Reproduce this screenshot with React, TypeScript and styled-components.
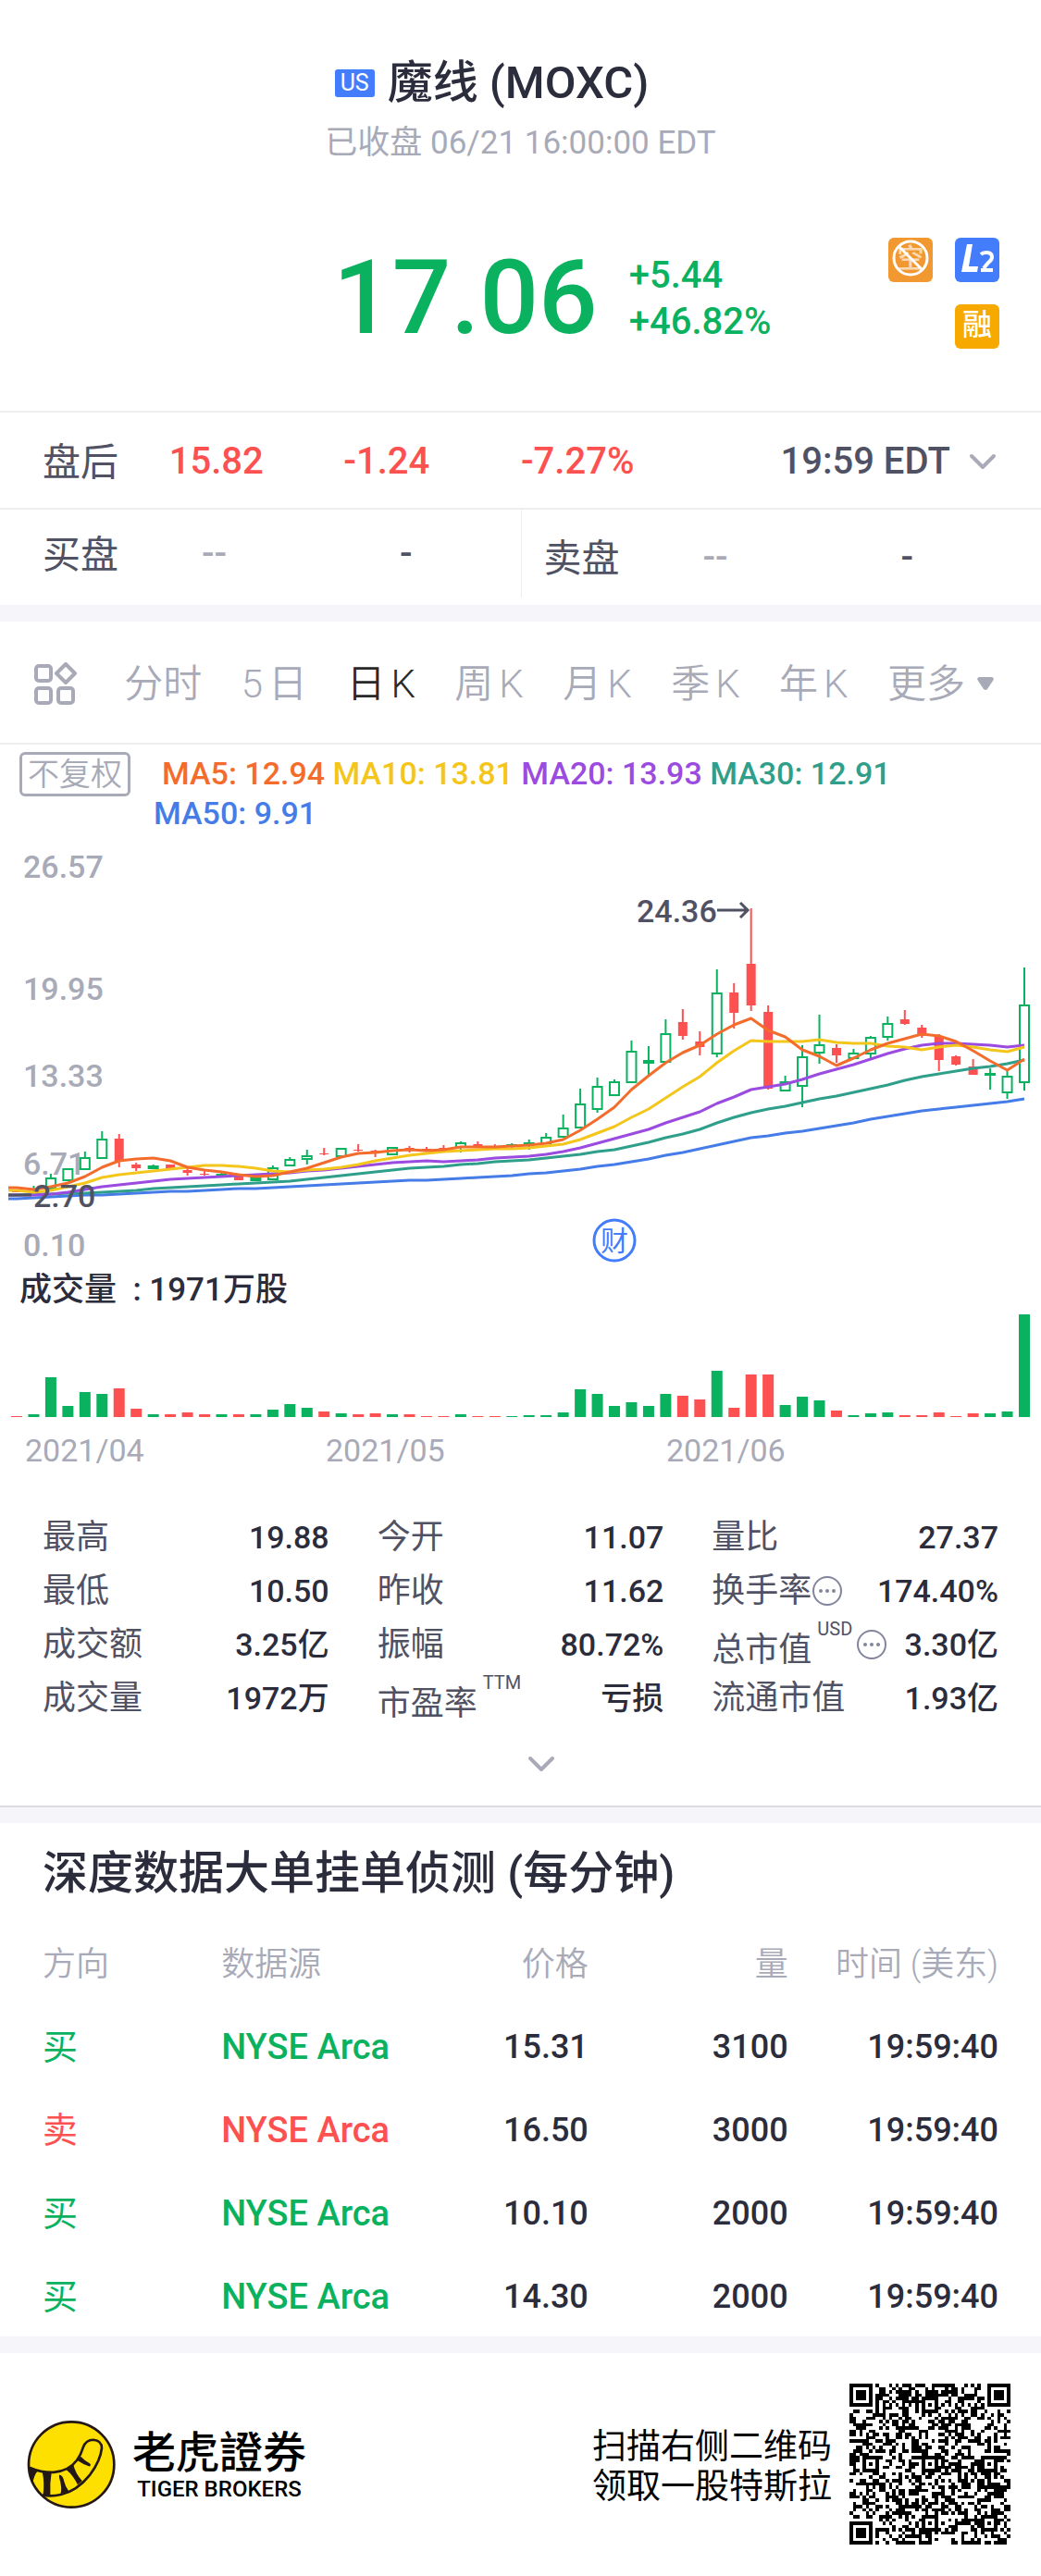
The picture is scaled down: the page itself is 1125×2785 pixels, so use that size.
import React from "react";
import styled, { createGlobalStyle } from "styled-components";

const color = {
  ink: "#2b2c3c",
  text: "#505264",
  muted: "#a8aab8",
  line: "#eeeef1",
  band: "#f6f6fa",
  green: "#0ab25f",
  red: "#fd5050",
  blue: "#437dfb",
};

const fontStack = 'Roboto, "Noto Sans CJK SC", sans-serif';

const GlobalStyle = createGlobalStyle`
  * { box-sizing: border-box; }
  body { margin: 0; background: #fff; color: ${color.ink}; font-family: ${fontStack}; }
  button { font-family: inherit; border: 0; padding: 0; background: none; cursor: pointer; }
  h1, h2, p, dl, dd, dt { margin: 0; }
  svg { display: block; flex: none; }
`;

/* ---------- header ---------- */

const Header = styled.header`
  padding-top: 60px;
`;
const TitleRow = styled.div`
  display: flex;
  align-items: center;
  justify-content: center;
  gap: 14px;
  padding-right: 62px;
`;
const Market = styled.span`
  padding: 0 6px;
  border-radius: 3px;
  background: ${color.blue};
  color: #fff;
  font-size: 25px;
  line-height: 30px;
`;
const Title = styled.h1`
  font-size: 49px;
  line-height: 60px;
  font-weight: 500;
`;
const Session = styled.p`
  margin-top: 15px;
  text-align: center;
  color: ${color.muted};
  font-size: 35px;
  line-height: 40px;
`;
const Quote = styled.div`
  display: flex;
  align-items: flex-start;
  padding: 0 45px 57px 32%;
  margin-top: 82px;
`;
const Price = styled.strong`
  color: ${color.green};
  font-size: 112px;
  line-height: 130px;
  font-weight: 500;
`;
const Change = styled.div`
  display: flex;
  flex-direction: column;
  margin: 16px 0 0 34px;
  color: ${color.green};
  font-size: 40px;
  line-height: 50px;
  font-weight: 500;
`;
const Badges = styled.div`
  display: grid;
  grid-template-columns: 48px 48px;
  gap: 24px;
  margin-left: auto;
`;
const Badge = styled.span<{ $bg: string; $end?: boolean }>`
  display: flex;
  align-items: center;
  justify-content: center;
  height: 48px;
  grid-column: ${(p) => (p.$end ? 2 : "auto")};
  border-radius: 6px;
  background: ${(p) => p.$bg};
  color: #fff;
  font-size: 32px;
  line-height: 44px;
  padding-bottom: 4px;
  font-weight: 500;
`;

const AfterHours = styled.div`
  display: grid;
  grid-template-columns: 137fr 189fr 192fr 160fr 355fr;
  align-items: center;
  height: 105px;
  padding: 2px 48px 0 46px;
  border-top: 2px solid ${color.line};
  color: ${color.red};
  font-size: 40px;
  font-weight: 500;
`;
const RowLabel = styled.span`
  padding-bottom: 6px;
  color: ${color.text};
  font-size: 41px;
  font-weight: 400;
`;
const TimeToggle = styled.button`
  display: flex;
  align-items: center;
  justify-content: flex-end;
  gap: 20px;
  color: ${color.text};
  font-size: 40px;
  font-weight: 500;
`;

const Book = styled.div`
  display: grid;
  grid-template-columns: 1fr 1fr;
  height: 105px;
  border-top: 2px solid ${color.line};
`;
const BookSide = styled.div<{ $ask?: boolean }>`
  display: grid;
  grid-template-columns: 172px 214px 1fr;
  align-items: center;
  height: 95px;
  padding: ${(p) => (p.$ask ? "8px 0 0 24px" : "0 0 0 46px")};
  border-left: ${(p) => (p.$ask ? `1px solid ${color.line}` : "0")};
  color: ${color.text};
  font-size: 40px;
  font-weight: 500;
`;
const Empty = styled.span`
  color: ${color.muted};
`;
const Band = styled.div<{ $ruled?: boolean }>`
  height: ${(p) => (p.$ruled ? 19 : 18)}px;
  border-top: ${(p) => (p.$ruled ? "2px solid #dcdce0" : "0")};
  background: ${color.band};
`;

/* ---------- period tabs ---------- */

const Tabs = styled.nav`
  display: flex;
  align-items: center;
  justify-content: space-between;
  height: 133px;
  padding: 4px 50px 0 36px;
  border-bottom: 2px solid ${color.line};
`;
const Tab = styled.button<{ $active?: boolean; $icon?: boolean; $menu?: boolean }>`
  display: flex;
  align-items: center;
  gap: ${(p) => (p.$menu ? 12 : 6)}px;
  margin-right: ${(p) => (p.$icon ? 8 : 0)}px;
  color: ${(p) => (p.$active ? "#2a2a2a" : color.muted)};
  font-size: 42px;
  line-height: 60px;
  font-weight: 350;
`;

/* ---------- chart ---------- */

const Legend = styled.div`
  display: flex;
  align-items: flex-start;
  padding: 8px 21px 0;
`;
const Adjust = styled.button`
  flex: none;
  width: 120px;
  height: 48px;
  border: 3px solid ${color.muted};
  border-radius: 6px;
  color: ${color.muted};
  font-size: 34px;
  line-height: 40px;
  font-weight: 350;
`;
const Averages = styled.p`
  margin-left: 25px;
  padding-top: 2px;
  text-indent: 9px;
  font-size: 34px;
  line-height: 43px;
  font-weight: 500;
`;
const Average = styled.span<{ $tint: string }>`
  display: inline-block;
  text-indent: 0;
  color: ${(p) => p.$tint};
`;
const VolumeLabel = styled.p`
  padding-left: 21px;
  font-size: 35px;
  line-height: 48px;
  font-weight: 500;
`;
const Dates = styled.div`
  display: grid;
  grid-template-columns: 325fr 368fr 405fr;
  margin-top: 10px;
  padding-left: 27px;
  color: ${color.muted};
  font-size: 34px;
  line-height: 46px;
`;

/* ---------- statistics ---------- */

const Stats = styled.dl`
  display: grid;
  grid-template-columns: repeat(3, 1fr);
  column-gap: 52px;
  margin-top: 42px;
  padding: 0 46px;
`;
const Stat = styled.div`
  display: flex;
  justify-content: space-between;
  height: 58px;
  line-height: 58px;
`;
const StatLabel = styled.dt`
  display: flex;
  align-items: center;
  color: ${color.text};
  font-size: 36px;
  white-space: nowrap;
`;
const StatName = styled.span<{ $lowered?: boolean }>`
  padding-top: ${(p) => (p.$lowered ? 12 : 0)}px;
`;
const Unit = styled.sup`
  align-self: flex-start;
  margin: 2px 4px 0 6px;
  font-size: 20px;
  line-height: 20px;
`;
const StatValue = styled.dd`
  font-size: 34px;
  font-weight: 500;
  white-space: nowrap;
`;
const Expand = styled.button`
  display: flex;
  align-items: center;
  justify-content: center;
  width: 100%;
  height: 87px;
  padding: 0 0 4px 44px;
`;

/* ---------- order table ---------- */

const Orders = styled.section`
  padding: 25px 46px 0;
`;
const Heading = styled.h2`
  font-size: 49px;
  line-height: 60px;
  font-weight: 500;
`;
const Table = styled.table`
  width: 100%;
  margin-top: 18px;
  border-collapse: collapse;
  table-layout: fixed;
  white-space: nowrap;
`;
const Col = styled.col<{ $share: number }>`
  width: ${(p) => p.$share}%;
`;
const Th = styled.th<{ $right?: boolean }>`
  height: 92px;
  padding: 0;
  text-align: ${(p) => (p.$right ? "right" : "left")};
  color: ${color.muted};
  font-size: 36px;
  font-weight: 350;
`;
const Td = styled.td<{ $right?: boolean; $tint?: string; $light?: boolean }>`
  height: 90px;
  padding: 4px 0 0;
  text-align: ${(p) => (p.$right ? "right" : "left")};
  color: ${(p) => p.$tint || color.ink};
  font-size: ${(p) => (p.$right ? 36 : 38)}px;
  line-height: 50px;
  font-weight: ${(p) => (p.$light ? 400 : 500)};
`;

/* ---------- footer ---------- */

const Footer = styled.footer`
  display: flex;
  align-items: center;
  padding: 33px 33px 33px 29px;
  color: #000;
`;
const Brand = styled.div`
  display: flex;
  flex-direction: column;
  align-items: center;
  gap: 4px;
  margin-left: 17px;
`;
const BrandName = styled.span`
  font-family: "Noto Sans CJK TC", sans-serif;
  font-size: 47px;
  line-height: 50px;
  font-weight: 500;
`;
const BrandLatin = styled.span`
  font-size: 24px;
  line-height: 28px;
  font-weight: 500;
`;
const Invite = styled.p`
  margin: 0 19px 0 auto;
  padding-top: 6px;
  font-size: 37px;
  line-height: 43px;
`;

/* ---------- icons ---------- */

const Chevron = () => (
  <svg width="30" height="18" viewBox="0 0 30 18" fill="none" stroke={color.muted} strokeWidth="4" strokeLinecap="round" strokeLinejoin="round">
    <path d="M3 3L15 15L27 3" />
  </svg>
);

const GridIcon = () => (
  <svg width="48" height="48" viewBox="0 0 48 48" fill="none" stroke={color.muted} strokeWidth="4" strokeLinejoin="round">
    <rect x="3" y="4" width="16" height="16" rx="3" />
    <rect x="3" y="28" width="16" height="16" rx="3" />
    <rect x="27" y="28" width="16" height="16" rx="3" />
    <path d="M35 2L45 12L35 22L25 12Z" />
  </svg>
);

const Caret = () => (
  <svg width="20" height="15" viewBox="0 0 20 15" fill={color.muted}>
    <path d="M3 0H17Q20 1 18 4L12 13Q10 15 8 13L2 4Q0 1 3 0Z" />
  </svg>
);

const NoShort = () => (
  <svg width="48" height="48" viewBox="0 0 48 48" fill="none" stroke="#fff">
    <text x="24" y="35" textAnchor="middle" fontSize="29" fontFamily={fontStack} fontWeight="500" fill="#fff" fillOpacity="0.65" stroke="none">空</text>
    <circle cx="24" cy="24" r="18" strokeWidth="3" />
    <path d="M12 12L36 36" strokeWidth="3" />
  </svg>
);

const LevelTwo = () => (
  <svg width="48" height="48" viewBox="0 0 48 48" fill="#fff">
    <path d="M13 9H19L15 33H25L24 39H7Z" />
    <path d="M28 20Q30 18 34 18Q40 18 40 23Q40 26 36 29L31 35M28 37H41" fill="none" stroke="#fff" strokeWidth="4" />
  </svg>
);

const More = () => (
  <svg width="34" height="34" viewBox="0 0 34 34" fill="#82859c">
    <circle cx="17" cy="17" r="15" fill="none" stroke="#82859c" strokeWidth="2" />
    <circle cx="10" cy="17" r="2" />
    <circle cx="17" cy="17" r="2" />
    <circle cx="24" cy="17" r="2" />
  </svg>
);

const TigerLogo = () => (
  <svg width="97" height="97" viewBox="28 18 290 290">
    <circle cx="172" cy="163" r="138" fill="#fde000" stroke="#231815" strokeWidth="8" />
    <path d="M40 174Q78 190 115 188Q164 184 190 149Q203 130 210 107Q219 83 243 83Q270 85 270 110Q266 150 232 196Q190 248 138 260Q108 267 82 262" fill="none" stroke="#231815" strokeWidth="8" strokeLinecap="round" />
    <g fill="#231815">
      <path d="M34 170L63 184Q52 196 47 222Q36 204 34 170Z" />
      <path d="M78 186H108Q102 222 104 261L80 263Q86 224 78 186Z" />
      <path d="M134 196Q144 198 148 216Q152 234 164 250L137 258Q143 240 133 206Q131 198 134 196Z" />
      <path d="M156 180L178 162Q185 192 207 216L192 228Q178 198 156 180Z" />
      <path d="M190 149L202 137Q216 152 232 160Q237 166 230 169Q210 163 190 149Z" />
    </g>
  </svg>
);

/* 49-module code: finders, timing and alignment marks over a seeded data field */
const QR_SIZE = 49;
function buildQr(): string {
  const on: boolean[][] = [];
  let seed = 20210621;
  for (let y = 0; y < QR_SIZE; y++) {
    on.push([]);
    for (let x = 0; x < QR_SIZE; x++) {
      seed = (seed * 1103515245 + 12345) % 2147483648;
      on[y].push(((seed >> 16) & 1) === 1);
    }
  }
  for (let i = 8; i < QR_SIZE - 8; i++) {
    on[6][i] = i % 2 === 0;
    on[i][6] = i % 2 === 0;
  }
  const ring = (cx: number, cy: number, reach: number, dark: (d: number) => boolean) => {
    for (let dy = -reach; dy <= reach; dy++)
      for (let dx = -reach; dx <= reach; dx++) {
        const x = cx + dx;
        const y = cy + dy;
        if (x >= 0 && y >= 0 && x < QR_SIZE && y < QR_SIZE) on[y][x] = dark(Math.max(Math.abs(dx), Math.abs(dy)));
      }
  };
  [[24, 6], [6, 24], [24, 24], [42, 24], [24, 42], [42, 42]].forEach(([x, y]) => ring(x, y, 2, (d) => d !== 1));
  [[3, 3], [45, 3], [3, 45]].forEach(([x, y]) => ring(x, y, 4, (d) => d < 2 || d === 3));
  let path = "";
  on.forEach((row, y) => row.forEach((v, x) => { if (v) path += `M${x} ${y}h1v1h-1z`; }));
  return path;
}
const qrPath = buildQr();

/* ---------- chart data ---------- */

// one row per session: rising?, high, body top, body bottom, low, volume
const sessions: [number, number, number, number, number, number][] = [
  [0, 387, 387, 388, 388, 1], [1, 381, 387, 391, 391, 3], [1, 368, 372, 385, 385, 43], [1, 362, 362, 376, 376, 12],
  [1, 344, 350, 364, 364, 27], [1, 322, 330, 352, 352, 25], [0, 325, 330, 355, 361, 31], [0, 356, 358, 362, 365, 9],
  [1, 358, 359, 363, 363, 3], [0, 358, 358, 362, 362, 3], [0, 362, 364, 367, 370, 5], [0, 365, 368, 369, 370, 3],
  [1, 367, 368, 370, 370, 3], [0, 370, 370, 375, 375, 3], [1, 371, 372, 376, 376, 3], [1, 359, 361, 375, 375, 8],
  [1, 350, 352, 360, 360, 14], [1, 342, 348, 353, 358, 10], [0, 340, 346, 347, 348, 6], [1, 340, 340, 350, 350, 4],
  [0, 336, 342, 343, 344, 3], [0, 342, 343, 346, 350, 4], [1, 339, 339, 348, 348, 3], [0, 338, 340, 343, 345, 3],
  [0, 339, 341, 342, 343, 1], [0, 337, 340, 341, 342, 1], [1, 333, 334, 340, 345, 3], [0, 333, 336, 338, 340, 1],
  [0, 336, 338, 339, 340, 1], [1, 335, 336, 339, 340, 1], [1, 331, 334, 337, 342, 2], [1, 324, 328, 336, 336, 2],
  [1, 304, 318, 329, 329, 5], [1, 276, 292, 319, 319, 30], [1, 264, 273, 299, 302, 25], [1, 266, 268, 284, 284, 12],
  [1, 224, 235, 270, 270, 16], [1, 230, 245, 249, 262, 12], [1, 201, 216, 248, 248, 25], [0, 190, 204, 219, 223, 23],
  [0, 214, 225, 231, 240, 19], [1, 147, 172, 239, 242, 50], [0, 162, 172, 194, 211, 10], [0, 81, 141, 186, 192, 46],
  [0, 186, 193, 276, 277, 46], [1, 262, 268, 279, 279, 13], [1, 229, 241, 274, 296, 22], [1, 196, 228, 238, 249, 18],
  [0, 228, 232, 240, 248, 7], [1, 233, 237, 244, 244, 2], [1, 219, 220, 239, 244, 4], [1, 198, 205, 221, 224, 5],
  [0, 191, 201, 206, 207, 2], [0, 207, 210, 219, 221, 2], [0, 217, 220, 245, 257, 5], [0, 240, 241, 250, 251, 1],
  [0, 244, 252, 261, 261, 4], [1, 254, 259, 261, 277, 4], [1, 256, 262, 281, 287, 6], [1, 145, 185, 270, 278, 111],
];

const averages = [
  { label: "MA5: 12.94", tint: "#f46c2c", points: [383, 385, 382, 378, 371, 361, 354, 352, 351, 354, 361, 364, 366, 369, 371, 370, 366, 362, 356, 350, 346, 345, 343, 342, 343, 342, 339, 339, 339, 338, 337, 335, 331, 321, 309, 296, 277, 262, 248, 237, 229, 217, 207, 200, 213, 220, 234, 241, 251, 243, 234, 227, 222, 217, 219, 225, 235, 246, 256, 244] },
  { label: "MA10: 13.81", tint: "#f4c61b", points: [386, 388, 386, 382, 378, 372, 369, 367, 365, 363, 361, 359, 359, 360, 362, 365, 366, 364, 363, 361, 358, 354, 351, 348, 346, 344, 343, 342, 341, 341, 340, 338, 336, 331, 324, 317, 307, 298, 286, 274, 263, 248, 235, 224, 225, 225, 225, 223, 226, 227, 227, 230, 231, 234, 231, 229, 231, 234, 236, 231] },
  { label: "MA20: 13.93", tint: "#9b4be0", points: [391, 391, 390, 388, 385, 382, 380, 378, 376, 374, 373, 372, 371, 370, 369, 368, 367, 365, 364, 362, 360, 358, 356, 355, 354, 355, 354, 353, 351, 350, 349, 347, 344, 340, 335, 330, 325, 320, 313, 307, 301, 292, 285, 277, 274, 271, 266, 260, 255, 250, 244, 238, 233, 229, 227, 227, 228, 229, 231, 229] },
  { label: "MA30: 12.91", tint: "#2f9f8b", points: [391, 390, 390, 389, 389, 388, 387, 386, 384, 383, 382, 381, 380, 379, 378, 377, 376, 374, 372, 370, 368, 366, 364, 362, 361, 360, 358, 357, 355, 354, 353, 351, 349, 347, 344, 342, 338, 334, 329, 325, 320, 313, 307, 302, 298, 295, 291, 287, 284, 280, 276, 272, 267, 263, 260, 257, 254, 252, 249, 245] },
  { label: "MA50: 9.91", tint: "#457ce8", points: [395, 394, 393, 392, 391, 391, 390, 389, 388, 387, 387, 386, 385, 384, 384, 383, 382, 381, 380, 379, 378, 377, 376, 375, 375, 374, 373, 372, 371, 370, 368, 367, 365, 363, 360, 358, 355, 352, 348, 345, 341, 337, 333, 329, 327, 324, 322, 319, 316, 313, 309, 306, 303, 300, 298, 296, 294, 292, 290, 287] },
];

const axis: [string, number][] = [["26.57", 48], ["19.95", 180], ["13.33", 274], ["6.71", 369], ["0.10", 457]];

const xAt = (i: number) => 18 + (i * 1089) / 59;

const CandleChart = () => (
  <svg width="100%" viewBox="0 0 1125 470" fontFamily={fontStack} fontSize="34" role="img" aria-label="日K">
    <g fill={color.muted} fontWeight="500">
      {axis.map(([label, y]) => <text key={label} x="25" y={y}>{label}</text>)}
    </g>
    {sessions.map(([up, high, top, bottom, low], i) => {
      const x = xAt(i);
      const stroke = up ? color.green : color.red;
      return (
        <g key={i} stroke={stroke} strokeWidth="2">
          <path d={`M${x} ${high}V${top}M${x} ${bottom}V${low}`} />
          {up ? (
            <rect x={x - 5} y={top + 1} width="10" height={Math.max(1, bottom - top - 2)} fill="#fff" />
          ) : (
            <rect x={x - 5} y={top} width="10" height={bottom - top} fill={color.red} stroke="none" />
          )}
        </g>
      );
    })}
    {[...averages].reverse().map(({ label, tint, points }) => (
      <polyline
        key={label}
        fill="none"
        stroke={tint}
        strokeWidth="3"
        strokeLinejoin="round"
        points={`9,${points[0]} ` + points.map((y, i) => `${xAt(i)},${y}`).join(" ")}
      />
    ))}
    <g fill={color.text} fontWeight="500">
      <text x="36" y="404">2.70</text>
      <text x="688" y="96">24.36</text>
    </g>
    <path d="M9 391H34M775 83H808M800 75L808 83L800 91" fill="none" stroke={color.text} strokeWidth="3" />
    <circle cx="664" cy="440" r="22" fill="none" stroke={color.blue} strokeWidth="3" />
    <text x="664" y="451" textAnchor="middle" fontSize="30" fill={color.blue}>财</text>
  </svg>
);

const VolumeChart = () => (
  <svg width="100%" viewBox="0 2 1125 116" role="img" aria-label="成交量">
    {sessions.map(([up, , , , , volume], i) => (
      <rect key={i} x={xAt(i) - 6} y={115 - volume} width="12" height={volume} fill={up ? color.green : color.red} />
    ))}
  </svg>
);

/* ---------- page ---------- */

const stats: { name: string; value: string; unit?: string; info?: boolean }[] = [
  { name: "最高", value: "19.88" }, { name: "今开", value: "11.07" }, { name: "量比", value: "27.37" },
  { name: "最低", value: "10.50" }, { name: "昨收", value: "11.62" }, { name: "换手率", value: "174.40%", info: true },
  { name: "成交额", value: "3.25亿" }, { name: "振幅", value: "80.72%" }, { name: "总市值", value: "3.30亿", unit: "USD", info: true },
  { name: "成交量", value: "1972万" }, { name: "市盈率", value: "亏损", unit: "TTM" }, { name: "流通市值", value: "1.93亿" },
];

const orders = [
  { side: "买", price: "15.31", size: "3100" },
  { side: "卖", price: "16.50", size: "3000" },
  { side: "买", price: "10.10", size: "2000" },
  { side: "买", price: "14.30", size: "2000" },
];

const periods = [["分时"], ["5", "日"], ["日", "K"], ["周", "K"], ["月", "K"], ["季", "K"], ["年", "K"]];

export default function App() {
  return (
    <>
      <GlobalStyle />
      <Header>
        <TitleRow>
          <Market>US</Market>
          <Title>魔线 (MOXC)</Title>
        </TitleRow>
        <Session>已收盘 06/21 16:00:00 EDT</Session>
        <Quote>
          <Price>17.06</Price>
          <Change>
            <span>+5.44</span>
            <span>+46.82%</span>
          </Change>
          <Badges>
            <Badge $bg="#f29830"><NoShort /></Badge>
            <Badge $bg={color.blue}><LevelTwo /></Badge>
            <Badge $bg="#f8a900" $end>融</Badge>
          </Badges>
        </Quote>
      </Header>
      <AfterHours>
        <RowLabel>盘后</RowLabel>
        <span>15.82</span>
        <span>-1.24</span>
        <span>-7.27%</span>
        <TimeToggle>
          19:59 EDT
          <Chevron />
        </TimeToggle>
      </AfterHours>
      <Book>
        <BookSide>
          <RowLabel>买盘</RowLabel>
          <Empty>--</Empty>
          <span>-</span>
        </BookSide>
        <BookSide $ask>
          <RowLabel>卖盘</RowLabel>
          <Empty>--</Empty>
          <span>-</span>
        </BookSide>
      </Book>
      <Band />

      <Tabs>
        <Tab $icon aria-label="指标"><GridIcon /></Tab>
        {periods.map((parts) => (
          <Tab key={parts[0]} $active={parts[0] === "日"}>
            {parts.map((part) => <span key={part}>{part}</span>)}
          </Tab>
        ))}
        <Tab $menu>更多<Caret /></Tab>
      </Tabs>

      <Legend>
        <Adjust>不复权</Adjust>
        <Averages>
          {averages.map(({ label, tint }) => (
            <React.Fragment key={label}>
              <Average $tint={tint}>{label}</Average>{" "}
            </React.Fragment>
          ))}
        </Averages>
      </Legend>
      <CandleChart />
      <VolumeLabel>成交量 &nbsp;: 1971万股</VolumeLabel>
      <VolumeChart />
      <Dates>
        <span>2021/04</span>
        <span>2021/05</span>
        <span>2021/06</span>
      </Dates>

      <Stats>
        {stats.map(({ name, value, unit, info }) => (
          <Stat key={name}>
            <StatLabel>
              <StatName $lowered={!!unit}>{name}</StatName>
              {unit && <Unit>{unit}</Unit>}
              {info && <More />}
            </StatLabel>
            <StatValue>{value}</StatValue>
          </Stat>
        ))}
      </Stats>
      <Expand aria-label="更多数据"><Chevron /></Expand>
      <Band $ruled />

      <Orders>
        <Heading>深度数据大单挂单侦测 (每分钟)</Heading>
        <Table>
          <colgroup>
            <Col $share={18.7} />
            <Col $share={19.3} />
            <Col $share={19.1} />
            <Col $share={20.9} />
            <Col $share={22} />
          </colgroup>
          <thead>
            <tr>
              <Th>方向</Th>
              <Th>数据源</Th>
              <Th $right>价格</Th>
              <Th $right>量</Th>
              <Th $right>时间 (美东)</Th>
            </tr>
          </thead>
          <tbody>
            {orders.map(({ side, price, size }) => {
              const tint = side === "买" ? color.green : color.red;
              return (
                <tr key={price}>
                  <Td $tint={tint} $light>{side}</Td>
                  <Td $tint={tint}>NYSE Arca</Td>
                  <Td $right>{price}</Td>
                  <Td $right>{size}</Td>
                  <Td $right>19:59:40</Td>
                </tr>
              );
            })}
          </tbody>
        </Table>
      </Orders>
      <Band />

      <Footer>
        <TigerLogo />
        <Brand>
          <BrandName>老虎證券</BrandName>
          <BrandLatin>TIGER BROKERS</BrandLatin>
        </Brand>
        <Invite>
          扫描右侧二维码
          <br />
          领取一股特斯拉
        </Invite>
        <svg width="174" height="174" viewBox={`0 0 ${QR_SIZE} ${QR_SIZE}`} shapeRendering="crispEdges" role="img" aria-label="二维码">
          <path d={qrPath} />
        </svg>
      </Footer>
    </>
  );
}
